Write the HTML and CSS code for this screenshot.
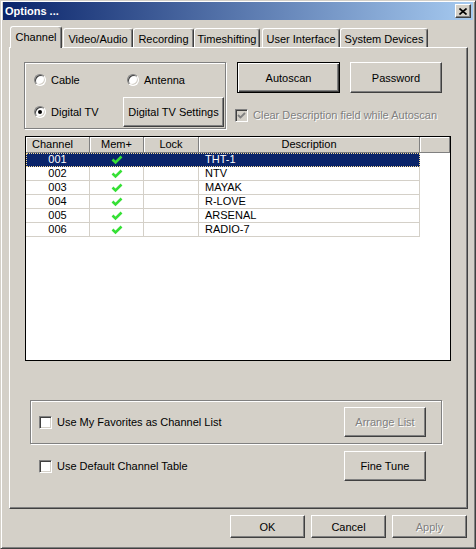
FILE: index.html
```html
<!DOCTYPE html>
<html>
<head>
<meta charset="utf-8">
<title>Options</title>
<link rel="stylesheet" href="styles.css">
</head>
<body>
<div class="window">
  <div class="titlebar">
    <span class="title">Options ...</span>
    <span class="close"><svg width="8" height="7" viewBox="0 0 8 7"><path d="M0.5 0.5 L7.5 6.5 M7.5 0.5 L0.5 6.5" stroke="#000" stroke-width="1.6"/></svg></span>
  </div>

  <div class="tabs">
    <div class="tab tab-active t-channel">Channel</div>
    <div class="tab t-video">Video/Audio</div>
    <div class="tab t-rec">Recording</div>
    <div class="tab t-time">Timeshifting</div>
    <div class="tab t-ui">User Interface</div>
    <div class="tab t-sys">System Devices</div>
  </div>

  <div class="panel">
    <div class="top">
      <div class="groupbox source">
        <label class="radio"><span class="radio-dot"></span>Cable</label>
        <label class="radio antenna"><span class="radio-dot"></span>Antenna</label>
        <label class="radio"><span class="radio-dot checked"></span>Digital TV</label>
        <span class="btn dtv">Digital TV Settings</span>
      </div>
      <div class="actions">
        <div class="btn-row">
          <span class="btn btn-default autoscan">Autoscan</span>
          <span class="btn password">Password</span>
        </div>
        <label class="check disabled"><span class="box box-disabled"><svg width="9" height="9" viewBox="0 0 9 9"><path d="M1 4 L3.5 6.5 L8 2" stroke="#808080" stroke-width="1.8" fill="none"/></svg></span>Clear Description field while Autoscan</label>
      </div>
    </div>

    <div class="listview">
      <div class="lv-header">
        <div class="hc c-chan left">Channel</div>
        <div class="hc c-mem">Mem+</div>
        <div class="hc c-lock">Lock</div>
        <div class="hc c-desc">Description</div>
        <div class="hc c-fill"></div>
      </div>
      <div class="lv-row selected">
        <div class="cell c-chan">001</div>
        <div class="cell c-mem"><svg class="tick" width="12" height="10" viewBox="0 0 12 10"><path d="M1.5 4.5 L4.5 7.5 L10.5 1.5" stroke="#36e036" stroke-width="2.6" fill="none"/></svg></div>
        <div class="cell c-lock"></div>
        <div class="cell c-desc">THT-1</div>
      </div>
      <div class="lv-row">
        <div class="cell c-chan">002</div>
        <div class="cell c-mem"><svg class="tick" width="12" height="10" viewBox="0 0 12 10"><path d="M1.5 4.5 L4.5 7.5 L10.5 1.5" stroke="#36e036" stroke-width="2.6" fill="none"/></svg></div>
        <div class="cell c-lock"></div>
        <div class="cell c-desc">NTV</div>
      </div>
      <div class="lv-row">
        <div class="cell c-chan">003</div>
        <div class="cell c-mem"><svg class="tick" width="12" height="10" viewBox="0 0 12 10"><path d="M1.5 4.5 L4.5 7.5 L10.5 1.5" stroke="#36e036" stroke-width="2.6" fill="none"/></svg></div>
        <div class="cell c-lock"></div>
        <div class="cell c-desc">MAYAK</div>
      </div>
      <div class="lv-row">
        <div class="cell c-chan">004</div>
        <div class="cell c-mem"><svg class="tick" width="12" height="10" viewBox="0 0 12 10"><path d="M1.5 4.5 L4.5 7.5 L10.5 1.5" stroke="#36e036" stroke-width="2.6" fill="none"/></svg></div>
        <div class="cell c-lock"></div>
        <div class="cell c-desc">R-LOVE</div>
      </div>
      <div class="lv-row">
        <div class="cell c-chan">005</div>
        <div class="cell c-mem"><svg class="tick" width="12" height="10" viewBox="0 0 12 10"><path d="M1.5 4.5 L4.5 7.5 L10.5 1.5" stroke="#36e036" stroke-width="2.6" fill="none"/></svg></div>
        <div class="cell c-lock"></div>
        <div class="cell c-desc">ARSENAL</div>
      </div>
      <div class="lv-row">
        <div class="cell c-chan">006</div>
        <div class="cell c-mem"><svg class="tick" width="12" height="10" viewBox="0 0 12 10"><path d="M1.5 4.5 L4.5 7.5 L10.5 1.5" stroke="#36e036" stroke-width="2.6" fill="none"/></svg></div>
        <div class="cell c-lock"></div>
        <div class="cell c-desc">RADIO-7</div>
      </div>
    </div>

    <div class="groupbox favorites">
      <label class="check"><span class="box"></span>Use My Favorites as Channel List</label>
      <span class="btn btn-disabled side-btn">Arrange List</span>
    </div>

    <div class="default-row">
      <label class="check"><span class="box"></span>Use Default Channel Table</label>
      <span class="btn side-btn">Fine Tune</span>
    </div>
  </div>

  <div class="footer">
    <span class="btn foot-btn">OK</span>
    <span class="btn foot-btn">Cancel</span>
    <span class="btn foot-btn btn-disabled">Apply</span>
  </div>
</div>
</body>
</html>
```

FILE: styles.css
```css
html, body {
  margin: 0;
  padding: 0;
  background: #d4d0c8;
}

body {
  font-family: "Liberation Sans", Arial, sans-serif;
  font-size: 11px;
  color: #000;
}

.window {
  width: 476px;
  height: 549px;
  box-sizing: border-box;
  background: #d4d0c8;
  border: 1px solid;
  border-color: #d4d0c8 #404040 #404040 #d4d0c8;
  box-shadow: inset 1px 1px #fff, inset -1px -1px #808080;
  padding: 1px 2px 2px 2px;
  display: flex;
  flex-direction: column;
}

/* title bar */
.titlebar {
  height: 18px;
  flex: none;
  display: flex;
  align-items: center;
  justify-content: space-between;
  padding: 0 2px 0 2px;
  background: linear-gradient(to right, #0a246a, #a6caf0);
}

.title {
  color: #fff;
  font-weight: bold;
  font-size: 11px;
}

.close {
  width: 16px;
  height: 14px;
  box-sizing: border-box;
  background: #d4d0c8;
  border: 1px solid;
  border-color: #fff #404040 #404040 #fff;
  box-shadow: inset -1px -1px #808080;
  display: flex;
  align-items: center;
  justify-content: center;
}

/* tabs */
.tabs {
  flex: none;
  display: flex;
  align-items: flex-end;
  height: 21px;
  margin-top: 6px;
  padding-left: 7px;
}

.tab {
  box-sizing: border-box;
  height: 19px;
  padding-top: 4px;
  line-height: 13px;
  text-align: center;
  border: 1px solid;
  border-bottom: none;
  border-color: #fff #404040 #404040 #fff;
  box-shadow: inset -1px 0 #808080;
  border-radius: 3px 3px 0 0;
  background: #d4d0c8;
  white-space: nowrap;
}

.tab-active {
  height: 22px;
  padding-top: 4px;
  margin-bottom: -1px;
  position: relative;
  z-index: 1;
}

.t-channel { width: 52px; }
.t-video { width: 70px; margin-left: 1px; }
.t-rec { width: 61px; }
.t-time { width: 66px; }
.t-ui { width: 78px; margin-left: 2px; }
.t-sys { width: 88px; }

/* panel */
.panel {
  flex: none;
  box-sizing: border-box;
  width: 459px;
  height: 462px;
  margin-left: 6px;
  border: 1px solid;
  border-color: #fff #404040 #404040 #fff;
  box-shadow: inset -1px -1px #808080;
  padding: 14px 0 0 14px;
  display: flex;
  flex-direction: column;
}

.top {
  display: flex;
  height: 68px;
  gap: 9px;
}

.groupbox {
  box-sizing: border-box;
  border: 1px solid #808080;
  box-shadow: inset 1px 1px #fff, 1px 1px #fff;
}

.source {
  width: 202px;
  height: 67px;
  display: grid;
  grid-template-columns: 89px auto;
  grid-template-rows: 14px 30px;
  row-gap: 10px;
  padding: 10px 0 0 9px;
  align-items: center;
}

.radio {
  display: flex;
  align-items: center;
  gap: 5px;
  line-height: 14px;
}

.antenna {
  margin-left: 4px;
}

.radio-dot {
  width: 12px;
  height: 12px;
  box-sizing: border-box;
  border-radius: 50%;
  border: 1px solid;
  border-color: #808080 #fff #fff #808080;
  box-shadow: inset 1px 1px #404040, inset -1px -1px #d4d0c8;
  background: #fff;
  display: flex;
  align-items: center;
  justify-content: center;
}

.radio-dot.checked::after {
  content: "";
  width: 4px;
  height: 4px;
  border-radius: 50%;
  background: #000;
}

/* buttons */
.btn {
  box-sizing: border-box;
  display: flex;
  align-items: center;
  justify-content: center;
  background: #d4d0c8;
  border: 1px solid;
  border-color: #fff #404040 #404040 #fff;
  box-shadow: inset -1px -1px #808080;
  white-space: nowrap;
}

.btn-default {
  border-color: #000;
  box-shadow: inset 1px 1px #fff, inset -1px -1px #404040, inset -2px -2px #808080;
}

.btn-disabled {
  color: #808080;
  text-shadow: 1px 1px #fff;
}

.dtv {
  width: 101px;
  height: 30px;
}

.actions {
  display: flex;
  flex-direction: column;
}

.btn-row {
  display: flex;
  gap: 10px;
  padding-left: 2px;
}

.autoscan {
  width: 103px;
  height: 31px;
}

.password {
  width: 92px;
  height: 31px;
}

.check {
  display: flex;
  align-items: center;
  gap: 5px;
  line-height: 14px;
}

.actions .check {
  margin-top: 15px;
}

.disabled {
  color: #808080;
  text-shadow: 1px 1px #fff;
}

.box {
  width: 13px;
  height: 13px;
  box-sizing: border-box;
  border: 1px solid;
  border-color: #808080 #fff #fff #808080;
  box-shadow: inset 1px 1px #404040, inset -1px -1px #d4d0c8;
  background: #fff;
  display: flex;
  align-items: center;
  justify-content: center;
  flex: none;
}

.box-disabled {
  background: #d4d0c8;
}

/* list view */
.listview {
  box-sizing: border-box;
  width: 426px;
  height: 225px;
  margin: 6px 0 0 1px;
  border: 1px solid #000;
  background: #fff;
}

.lv-header {
  display: flex;
  height: 16px;
}

.hc {
  box-sizing: border-box;
  height: 16px;
  background: #d4d0c8;
  border-right: 1px solid #808080;
  border-bottom: 1px solid #808080;
  box-shadow: inset 1px 1px #fff;
  text-align: center;
  line-height: 15px;
}

.hc.left {
  text-align: left;
  padding-left: 6px;
}

.c-chan { width: 64px; }
.c-mem { width: 54px; }
.c-lock { width: 55px; }
.c-desc { width: 221px; }
.c-fill { width: 30px; }

.lv-row {
  display: flex;
  height: 14px;
  width: 394px;
}

.cell {
  box-sizing: border-box;
  height: 14px;
  line-height: 13px;
  border-right: 1px solid #d4d0c8;
  border-bottom: 1px solid #d4d0c8;
  text-align: center;
}

.cell.c-mem {
  display: flex;
  align-items: center;
  justify-content: center;
}

.cell.c-desc {
  text-align: left;
  padding-left: 6px;
}

.lv-row.selected {
  background: #0a246a;
  color: #fff;
  outline: 1px dotted #f5db95;
  outline-offset: -1px;
}

.lv-row.selected .cell {
  border-color: #0a246a;
}

/* bottom groups */
.favorites {
  width: 412px;
  height: 44px;
  margin: 39px 0 0 6px;
  display: flex;
  align-items: center;
  justify-content: space-between;
  padding: 0 15px 0 8px;
}

.side-btn {
  width: 82px;
  height: 30px;
}

.default-row {
  width: 412px;
  height: 30px;
  margin: 7px 0 0 6px;
  box-sizing: border-box;
  display: flex;
  align-items: center;
  justify-content: space-between;
  padding: 0 16px 0 9px;
}

/* footer */
.footer {
  display: flex;
  justify-content: flex-end;
  gap: 6px;
  margin-top: 6px;
  padding-right: 6px;
}

.foot-btn {
  width: 75px;
  height: 23px;
}
```
